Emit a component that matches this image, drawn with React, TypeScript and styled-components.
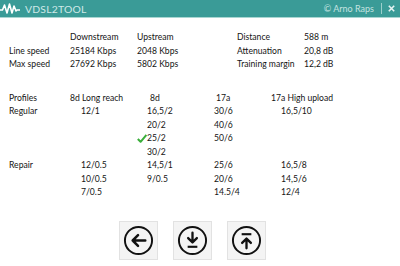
import React from "react";
import styled, { createGlobalStyle } from "styled-components";

const Global = createGlobalStyle`
  html, body { margin: 0; padding: 0; background: #ffffff; }
  body { font-family: "Lato", "Noto Sans", sans-serif; color: #141414; }
`;

const Window = styled.div`
  width: 400px;
  height: 266px;
  display: flex;
  flex-direction: column;
  background: #fff;
  overflow: hidden;
`;

const TitleBar = styled.div`
  height: 18px;
  width: 400px;
  box-sizing: border-box;
  background: #3a9b97;
  border-bottom: 1px solid #a9d6d2;
  display: flex;
  align-items: center;
  padding: 0 5px 0 0;
  flex-shrink: 0;
`;

const Logo = styled.svg`
  width: 20px;
  height: 14px;
  margin-right: 5px;
  flex-shrink: 0;
`;

const AppName = styled.span`
  font-family: "Lato", "Noto Sans", sans-serif;
  font-size: 10.4px;
  color: #cfe9e7;
  letter-spacing: 0.2px;
`;

const Spacer = styled.div`
  flex: 1;
`;

const Credit = styled.span`
  font-size: 9px;
  color: #c4e3e0;
  flex-shrink: 0;
`;

const Sep = styled.div`
  width: 1px;
  height: 11px;
  background: #9ccfcb;
  margin: 0 6px 0 7px;
  flex-shrink: 0;
`;

const CloseIcon = styled.svg`
  width: 7px;
  height: 7px;
  flex-shrink: 0;
`;

const Content = styled.div`
  padding: 13px 0 0 9px;
  display: flex;
  flex-direction: column;
`;

const Grid = styled.div<{ $cols: string }>`
  display: grid;
  grid-template-columns: ${(p) => p.$cols};
  grid-auto-rows: 13.5px;
  font-size: 8.6px;
  line-height: 13.5px;
  white-space: nowrap;
`;

const Cell = styled.div<{ $off?: number }>`
  padding-left: ${(p) => p.$off ?? 0}px;
  position: relative;
`;

const Check = styled.svg<{ $left: number }>`
  position: absolute;
  left: ${(p) => p.$left}px;
  top: 2px;
  width: 10px;
  height: 9px;
`;

const ProfilesGrid = styled(Grid)`
  margin-top: 20px;
`;

const Buttons = styled.div`
  display: flex;
  justify-content: center;
  gap: 15px;
  margin-top: 21px;
  padding-right: 24px;
`;

const IconButton = styled.button`
  width: 39px;
  height: 39px;
  padding: 0;
  background: #f4f4f4;
  border: 1px solid #e2e2e2;
  display: flex;
  align-items: center;
  justify-content: center;
`;

const Icon = styled.svg`
  width: 31px;
  height: 31px;
`;

type Row = (string | null)[];

const profileRows: Row[] = [
  ["Regular", "12/1", "16,5/2", "30/6", "16,5/10"],
  [null, null, "20/2", "40/6", null],
  [null, null, "25/2", "50/6", null],
  [null, null, "30/2", null, null],
  ["Repair", "12/0.5", "14,5/1", "25/6", "16,5/8"],
  [null, "10/0.5", "9/0.5", "20/6", "14,5/6"],
  [null, "7/0.5", null, "14.5/4", "12/4"],
];

const valueOffsets = [0, 11, 10, 10, 10];

export default function App() {
  return (
    <Window>
      <Global />
      <TitleBar>
        <Logo viewBox="0 0 20 14">
          <polyline
            points="0,8 2.5,8 4.5,3 7,11 9.5,2 12,11 14,4 16,9 17,8 20,8"
            fill="none"
            stroke="#ffffff"
            strokeWidth="1.6"
            strokeLinejoin="round"
            strokeLinecap="round"
          />
        </Logo>
        <AppName>VDSL2TOOL</AppName>
        <Spacer />
        <Credit>© Arno Raps</Credit>
        <Sep />
        <CloseIcon viewBox="0 0 7 7">
          <path d="M0.8 0.8 L6.2 6.2 M6.2 0.8 L0.8 6.2" stroke="#e6f4f3" strokeWidth="1.6" />
        </CloseIcon>
      </TitleBar>
      <Content>
        <Grid $cols="61px 67px 100px 67px 80px">
          <Cell />
          <Cell>Downstream</Cell>
          <Cell>Upstream</Cell>
          <Cell>Distance</Cell>
          <Cell>588 m</Cell>
          <Cell>Line speed</Cell>
          <Cell>25184 Kbps</Cell>
          <Cell>2048 Kbps</Cell>
          <Cell>Attenuation</Cell>
          <Cell>20,8 dB</Cell>
          <Cell>Max speed</Cell>
          <Cell>27692 Kbps</Cell>
          <Cell>5802 Kbps</Cell>
          <Cell>Training margin</Cell>
          <Cell>12,2 dB</Cell>
        </Grid>
        <ProfilesGrid $cols="61px 67px 67px 67px 100px">
          <Cell>Profiles</Cell>
          <Cell>8d Long reach</Cell>
          <Cell $off={13}>8d</Cell>
          <Cell $off={12}>17a</Cell>
          <Cell>17a High upload</Cell>
          {profileRows.map((row, r) =>
            row.map((v, c) => (
              <Cell key={`${r}-${c}`} $off={v ? valueOffsets[c] : 0}>
                {r === 2 && c === 2 && (
                  <Check $left={valueOffsets[c] - 10} viewBox="0 0 10 9">
                    <path d="M0.8 5 L3.6 7.8 L9.4 1" fill="none" stroke="#3aae3a" strokeWidth="2" strokeLinejoin="round" />
                  </Check>
                )}
                {v}
              </Cell>
            ))
          )}
        </ProfilesGrid>
        <Buttons>
          <IconButton aria-label="Back">
            <Icon viewBox="0 0 32 32">
              <circle cx="16" cy="16" r="14" fill="none" stroke="#111" strokeWidth="2" />
              <path d="M23 16 H10 M15.5 10.5 L10 16 L15.5 21.5" fill="none" stroke="#111" strokeWidth="2.6" strokeLinecap="round" strokeLinejoin="round" />
            </Icon>
          </IconButton>
          <IconButton aria-label="Download">
            <Icon viewBox="0 0 32 32">
              <circle cx="16" cy="16" r="14" fill="none" stroke="#111" strokeWidth="2" />
              <path d="M16 8 V18 M11.5 13.5 L16 18 L20.5 13.5" fill="none" stroke="#111" strokeWidth="2.4" strokeLinecap="round" strokeLinejoin="round" />
              <path d="M11 22.5 H21" fill="none" stroke="#111" strokeWidth="2.2" />
            </Icon>
          </IconButton>
          <IconButton aria-label="Upload">
            <Icon viewBox="0 0 32 32">
              <circle cx="16" cy="16" r="14" fill="none" stroke="#111" strokeWidth="2" />
              <path d="M16 24 V14 M11.5 18.5 L16 14 L20.5 18.5" fill="none" stroke="#111" strokeWidth="2.4" strokeLinecap="round" strokeLinejoin="round" />
              <path d="M11 9.5 H21" fill="none" stroke="#111" strokeWidth="2.2" />
            </Icon>
          </IconButton>
        </Buttons>
      </Content>
    </Window>
  );
}
